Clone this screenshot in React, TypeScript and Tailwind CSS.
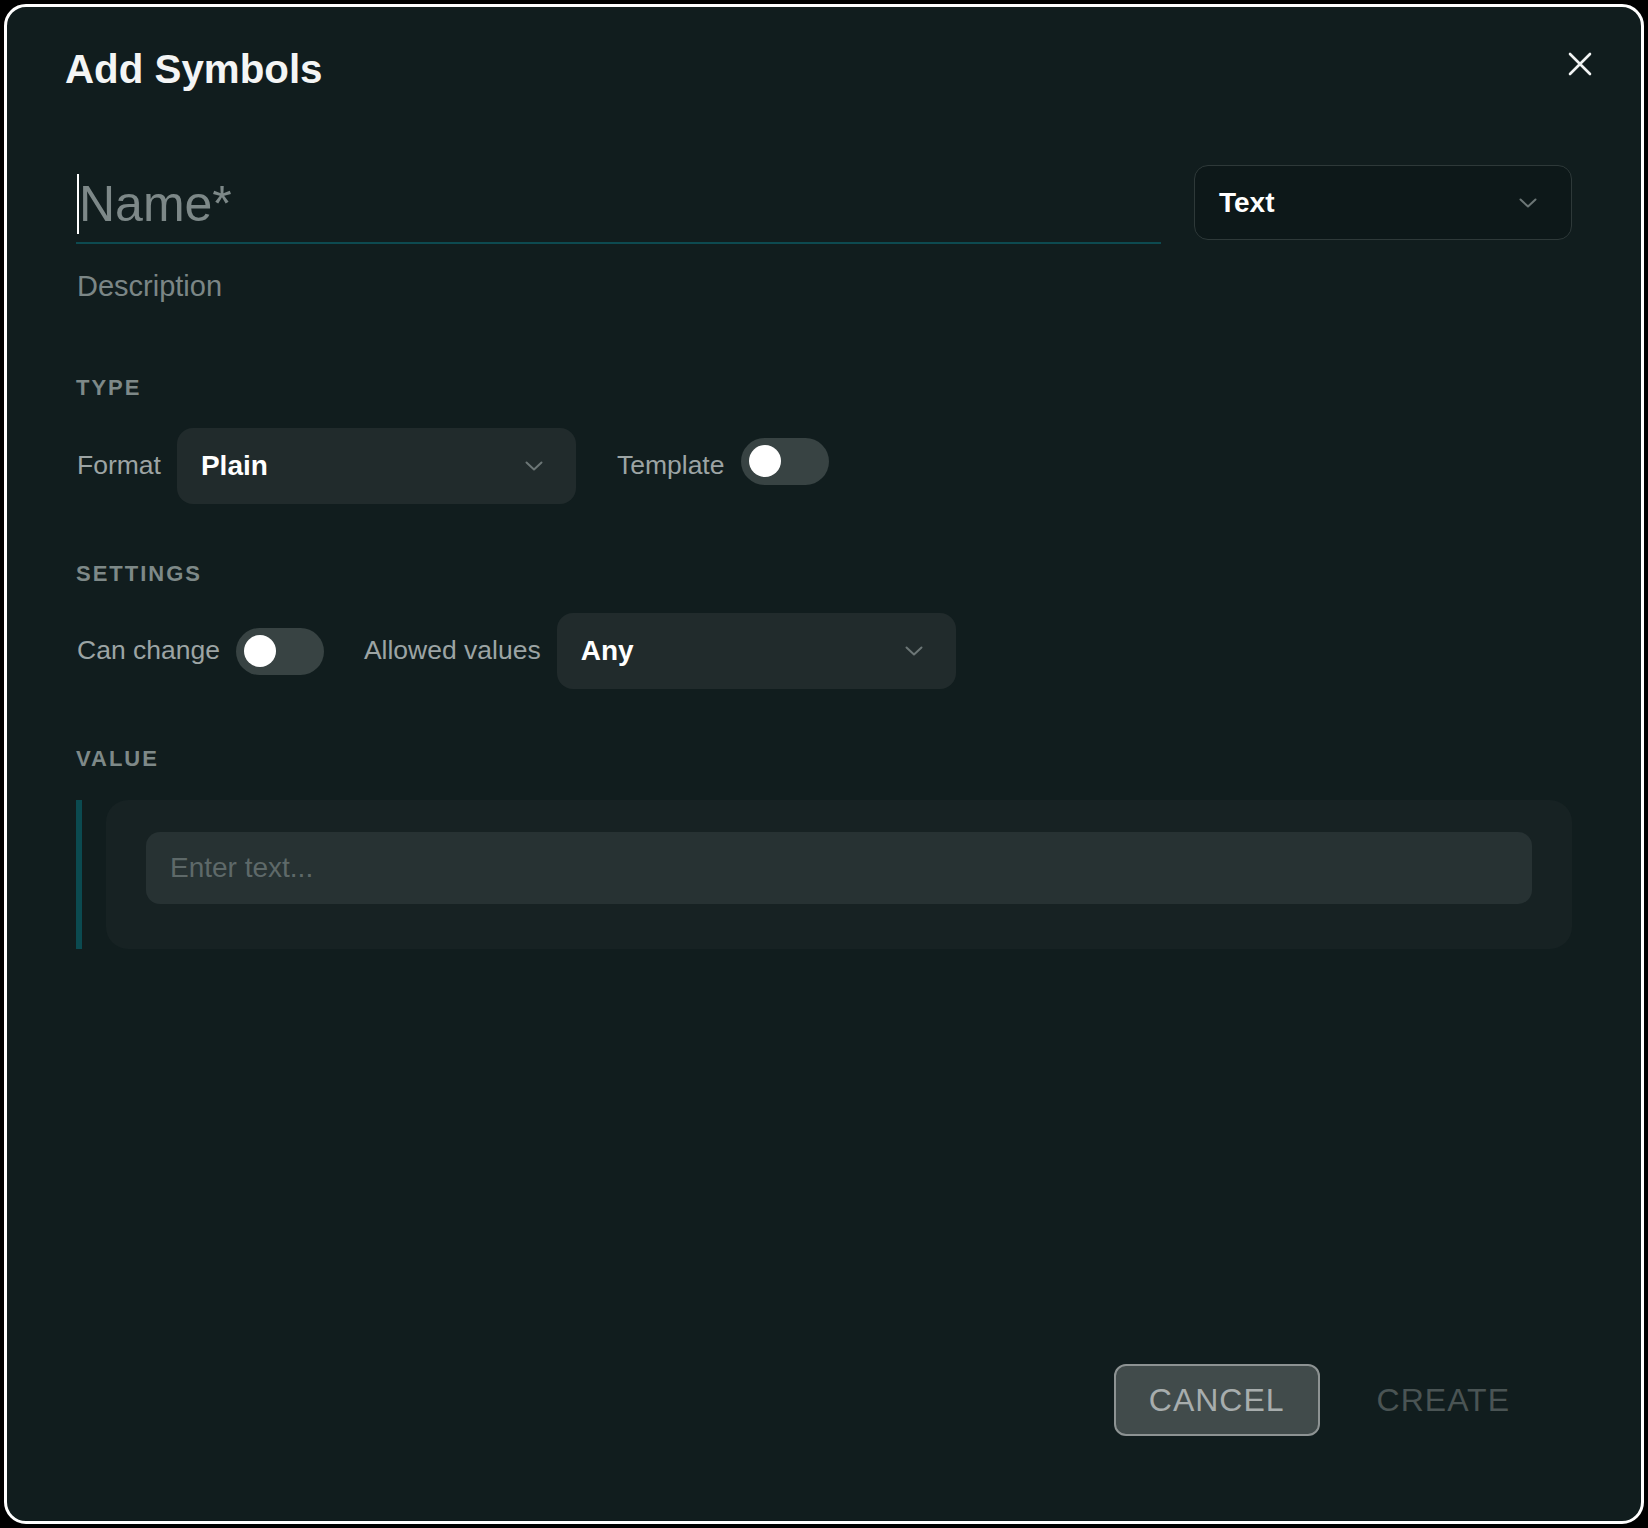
import React from "react";

const font = { fontFamily: '"Liberation Sans", Arial, sans-serif' };

function Chevron() {
  return (
    <svg width="18" height="10" viewBox="0 0 18 10" fill="none">
      <path d="M1.5 1.5 L9 8.5 L16.5 1.5" stroke="#6c7676" strokeWidth="2" strokeLinecap="round" strokeLinejoin="round" />
    </svg>
  );
}

function Toggle({ up }: { up?: boolean }) {
  return (
    <div
      className={
        up
          ? "mb-[10px] flex h-[47px] w-[88px] items-center rounded-full bg-[#384343] pl-[8px]"
          : "flex h-[47px] w-[88px] items-center rounded-full bg-[#384343] pl-[8px]"
      }
    >
      <div className="h-[32px] w-[32px] rounded-full bg-white" />
    </div>
  );
}

function Select({ label, dark }: { label: string; dark?: boolean }) {
  return (
    <div
      className={
        dark
          ? "flex h-[75px] w-[378px] shrink-0 items-center justify-between rounded-[14px] border-[1.5px] border-[#2e3939] bg-[#0d1819] pl-[24px] pr-[34px]"
          : "flex h-[76px] w-[399px] shrink-0 items-center justify-between rounded-[16px] bg-[#212b2c] pl-[24px] pr-[33px]"
      }
    >
      <span className="text-[28px] font-bold text-white">{label}</span>
      <Chevron />
    </div>
  );
}

function SectionTitle({ children, mt }: { children: React.ReactNode; mt: string }) {
  return (
    <div className={`${mt} text-[22px] font-bold leading-[28px] tracking-[2px] text-[#7e8988]`}>{children}</div>
  );
}

export default function App() {
  return (
    <div className="h-[1528px] w-full bg-black p-[4px]" style={font}>
      <div className="flex h-full flex-col rounded-[22px] border-[3px] border-white bg-[#111d1e]">
        <div className="flex items-center justify-between pl-[58px] pr-[49px] pt-[39px]">
          <h1 className="text-[40.3px] font-bold leading-[48px] text-[#f4f5f5]">Add Symbols</h1>
          <svg width="24" height="24" viewBox="0 0 24 24" className="-mt-[12px]">
            <path d="M2 2 L22 22 M22 2 L2 22" stroke="#f2f4f4" strokeWidth="2.6" strokeLinecap="round" />
          </svg>
        </div>

        <div className="flex flex-1 flex-col px-[69px]">
          <div className="mt-[71px] flex items-start gap-[33px]">
            <div className="flex h-[79px] flex-1 items-center border-b-2 border-[#0d4a50]">
              <span className="ml-[1px] h-[60px] w-[2px] bg-white" />
              <span className="text-[50px] leading-none text-[#7d8888]">Name*</span>
            </div>
            <Select label="Text" dark />
          </div>

          <div className="mt-[24px] pl-[1px] text-[29px] leading-[36px] text-[#7b8686]">Description</div>

          <SectionTitle mt="mt-[70px]">TYPE</SectionTitle>
          <div className="mt-[26px] flex items-center pl-[1px]">
            <span className="mr-[16px] text-[26.5px] text-[#9ca4a4]">Format</span>
            <Select label="Plain" />
            <span className="ml-[41px] mr-[17px] text-[26.5px] text-[#9ca4a4]">Template</span>
            <Toggle up />
          </div>

          <SectionTitle mt="mt-[56px]">SETTINGS</SectionTitle>
          <div className="mt-[25px] flex items-center pl-[1px]">
            <span className="mr-[16px] text-[26.5px] text-[#9ca4a4]">Can change</span>
            <Toggle />
            <span className="ml-[40px] mr-[16px] text-[26.5px] text-[#9ca4a4]">Allowed values</span>
            <Select label="Any" />
          </div>

          <SectionTitle mt="mt-[56px]">VALUE</SectionTitle>
          <div className="mt-[27px] flex gap-[24px]">
            <div className="w-[6px] bg-[#0b4a50]" />
            <div className="flex-1 rounded-[22px] bg-[#172223] px-[40px] pb-[45px] pt-[32px]">
              <div className="flex h-[72px] items-center rounded-[14px] bg-[#273233] pl-[24px]">
                <span className="text-[28px] text-[#5e6969]">Enter text...</span>
              </div>
            </div>
          </div>
        </div>

        <div className="flex items-center justify-end gap-[22px] pb-[85px] pr-[96px]">
          <button className="flex h-[72px] items-center rounded-[12px] border-2 border-[#8d9393] bg-[#414b4b] px-[33px] text-[32px] tracking-[1px] text-[#a7adad]">
            CANCEL
          </button>
          <button className="flex h-[72px] items-center rounded-[12px] border-2 border-transparent px-[33px] text-[32px] tracking-[1px] text-[#4a5454]">
            CREATE
          </button>
        </div>
      </div>
    </div>
  );
}
